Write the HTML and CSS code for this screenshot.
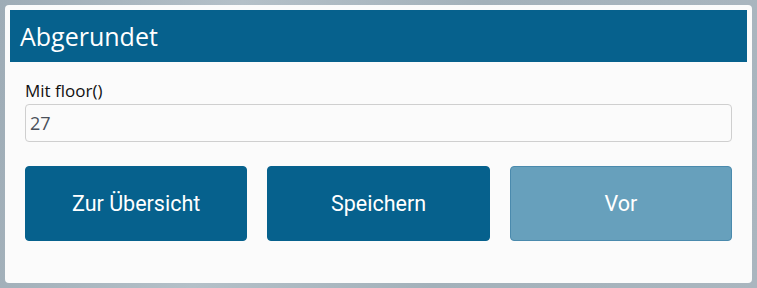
FILE: index.html
```html
<!doctype html>
<html lang="de">
  <head>
    <meta charset="UTF-8" />
    <title>Abgerundet</title>
    <link rel="stylesheet" href="styles.css">
  </head>
  <body>
    <div class="card">
      <div class="card-header">Abgerundet</div>
      <div class="card-body">
        <label class="field-label" for="floor-value">Mit floor()</label>
        <input id="floor-value" class="field-input" type="text" value="27" readonly />
        <div class="button-row">
          <button class="btn">Zur Übersicht</button>
          <button class="btn">Speichern</button>
          <button class="btn btn-disabled">Vor</button>
        </div>
      </div>
    </div>
  </body>
</html>
```

FILE: styles.css
```css
/* Base */
html,
body {
  margin: 0;
  height: 100%;
}

body {
  padding: 5px;
  box-sizing: border-box;
  background: linear-gradient(100deg, #9eacb6 0%, #b4c0c8 30%, #a3b1ba 60%, #aab6bf 100%);
  font-family: "Open Sans", "Noto Sans", sans-serif;
}

/* Card */
.card {
  height: 100%;
  box-sizing: border-box;
  padding: 5px;
  background-color: #fbfbfb;
  border-radius: 4px;
}

.card-header {
  height: 52px;
  padding: 0 10px;
  display: flex;
  align-items: center;
  background-color: #06618d;
  color: #fff;
  font-size: 25px;
}

.card-body {
  padding: 18px 15px 0;
}

/* Form field */
.field-label {
  display: block;
  height: 21px;
  line-height: 21px;
  font-size: 17px;
  color: #111;
}

.field-input {
  display: block;
  width: 100%;
  height: 38px;
  margin-top: 3px;
  padding: 0 4px;
  box-sizing: border-box;
  border: 1px solid #cfcfcf;
  border-radius: 4px;
  background-color: #fbfbfb;
  font-family: "Open Sans", sans-serif;
  font-size: 18px;
  color: #4a505a;
  outline: none;
}

/* Buttons */
.button-row {
  display: grid;
  grid-template-columns: repeat(3, 1fr);
  gap: 20px;
  margin-top: 24px;
}

.btn {
  height: 75px;
  border: 1px solid #06618d;
  border-radius: 4px;
  background-color: #06618d;
  color: #fff;
  font-family: Roboto, sans-serif;
  font-size: 21.5px;
}

.btn-disabled {
  background-color: #67a0bc;
  border-color: #4a8aad;
}
```
